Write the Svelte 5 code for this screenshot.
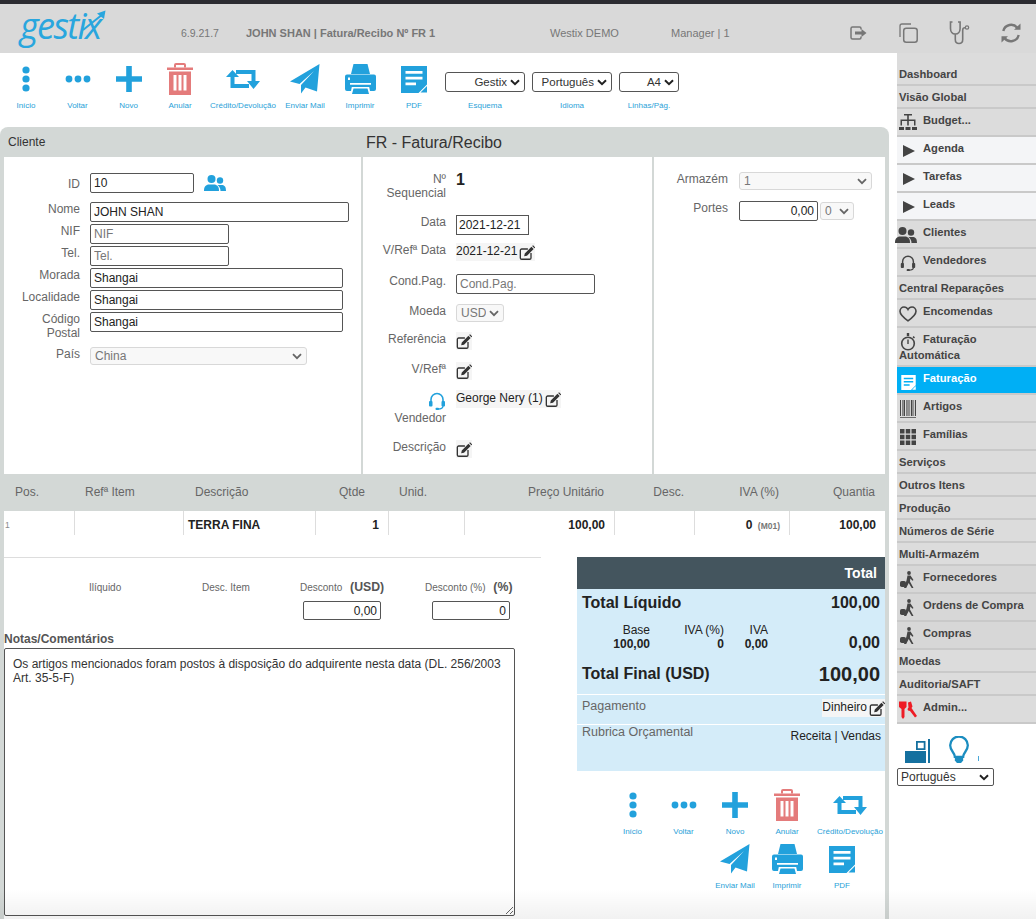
<script>
  const tb = [
    { l: 'Início', i: 'vdots', w: 14, h: 26 },
    { l: 'Voltar', i: 'hdots', w: 26, h: 10 },
    { l: 'Novo', i: 'plus', w: 26, h: 26 },
    { l: 'Anular', i: 'trash', w: 26, h: 32, c: 'red' },
    { l: 'Crédito/Devolução', i: 'retweet', w: 34, h: 20 },
    { l: 'Enviar Mail', i: 'plane', w: 30, h: 30 },
    { l: 'Imprimir', i: 'printer', w: 31, h: 30 },
    { l: 'PDF', i: 'doc', w: 26, h: 27 }
  ];
  const side = [
    { t: 'Dashboard' }, { t: 'Visão Global' },
    { t: 'Budget...', i: 'org' },
    { t: 'Agenda', i: 'play', c: 'light' }, { t: 'Tarefas', i: 'play', c: 'light' }, { t: 'Leads', i: 'play', c: 'light' },
    { t: 'Clientes', i: 'people', c: 'ppl' }, { t: 'Vendedores', i: 'headset' },
    { t: 'Central Reparações' },
    { t: 'Encomendas', i: 'heart' },
    { t: 'Faturação', t2: 'Automática', i: 'watch' },
    { t: 'Faturação', i: 'doc', c: 'active' },
    { t: 'Artigos', i: 'barcode' }, { t: 'Famílias', i: 'grid' },
    { t: 'Serviços' }, { t: 'Outros Itens' }, { t: 'Produção' }, { t: 'Números de Série' }, { t: 'Multi-Armazém' },
    { t: 'Fornecedores', i: 'walker', c: 'dim' }, { t: 'Ordens de Compra', i: 'walker', c: 'dim' }, { t: 'Compras', i: 'walker', c: 'dim' },
    { t: 'Moedas' }, { t: 'Auditoria/SAFT' },
    { t: 'Admin...', i: 'keys', c: 'keys' }
  ];
</script>

<svg class="defs" aria-hidden="true">
  <symbol id="vdots" viewBox="0 0 14 26"><circle cx="7" cy="4" r="3.6"/><circle cx="7" cy="13" r="3.6"/><circle cx="7" cy="22" r="3.6"/></symbol>
  <symbol id="hdots" viewBox="0 0 26 10"><circle cx="4" cy="5" r="3.4"/><circle cx="13" cy="5" r="3.4"/><circle cx="22" cy="5" r="3.4"/></symbol>
  <symbol id="plus" viewBox="0 0 26 26"><path d="M10.2 0h5.6v10.2H26v5.6H15.8V26h-5.6V15.8H0v-5.6h10.2z"/></symbol>
  <symbol id="trash" viewBox="0 0 26 32"><path d="M8 4.500V2a1 1 0 0 1 1-1h8a1 1 0 0 1 1 1v2.500" fill="none" stroke="currentColor" stroke-width="2"/><path d="M0 4.500h26V7H0z"/><path fill-rule="evenodd" d="M2 8.500h22V32H2zM6.500 12v15.500h3V12zM11.500 12v15.500h3V12zM16.500 12v15.500h3V12z"/></symbol>
  <symbol id="retweet" viewBox="0 0 34 20"><path d="M0 8 6.500 1 13 8H8.500v7H23v4H4.500V8z"/><path d="M10 1h19.500v11H34l-6.500 8L21 12h4.500V5H10z"/></symbol>
  <symbol id="plane" viewBox="0 0 30 30"><path d="M29.500 0 0 17.500l9.500 2.500L24 7 11 21v8.500l4.500-6 11.500 4z"/></symbol>
  <symbol id="printer" viewBox="0 0 31 30"><path d="M8.500 0h14L25 10H6z"/><path fill-rule="evenodd" d="M2 10.500h27a2 2 0 0 1 2 2V25a2 2 0 0 1-2 2h-4l-.8-4H6.800L6 27H2a2 2 0 0 1-2-2V12.500a2 2 0 0 1 2-2zM3 13.500V16h2v-2.500zM5 19v1.700h21V19z"/><path d="M8.500 24.500h14L24 30H7z"/></symbol>
  <symbol id="doc" viewBox="0 0 26 27"><path fill-rule="evenodd" d="M0 0h26v18.500L17.500 27H0zM4.500 5v2.800h17V5zM4.500 10.800v2.800h17v-2.800zM4.500 16.500v2.800H15v-2.800z"/><path d="M19.500 26.500 26 20v6.500z"/></symbol>
  <symbol id="org" viewBox="0 0 18 18"><path d="M5 0h8v1.500H5zM8.200 1.500h1.600v4H8.200zM1.500 5.500h15V7h-15zM1.500 7H3v4.500H1.500zM8.200 7h1.600v4.500H8.200zM15 7h1.500v4.500H15zM0 13h5v3H0zM6.500 13h5v3h-5zM13 13h5v3h-5z"/></symbol>
  <symbol id="play" viewBox="0 0 18 18"><path d="M4 3l12 6-12 6z"/></symbol>
  <symbol id="people" viewBox="0 0 22 18"><circle cx="7.500" cy="5" r="4"/><path d="M0 17c0-4 1-5.500 4-6.500h7c3 1 4 2.500 4 6.500z"/><circle cx="16" cy="6.500" r="3.200"/><path d="M13.500 11h5c2.500.8 3.500 2 3.500 6h-5.500c0-2.500-1-4.500-3-6z"/></symbol>
  <symbol id="headset" viewBox="0 0 18 20"><path d="M3 11V8.500a6 6 0 0 1 12 0V11" fill="none" stroke="currentColor" stroke-width="1.600"/><rect x="1" y="10" width="3.500" height="5.500" rx="1"/><rect x="13.500" y="10" width="3.500" height="5.500" rx="1"/><path d="M15 15c0 2.500-2 3-5 3" fill="none" stroke="currentColor" stroke-width="1.300"/><rect x="7.500" y="16.800" width="3.500" height="2.200" rx="1"/></symbol>
  <symbol id="heart" viewBox="0 0 18 16"><path d="M9 14.800C4 11.300 1 8.800 1 5.300 1 2.800 2.900 1 5 1c1.700 0 3.200.9 4 2.500C9.800 1.900 11.300 1 13 1c2.100 0 4 1.800 4 4.300 0 3.500-3 6-8 9.500z" fill="none" stroke="currentColor" stroke-width="1.600"/></symbol>
  <symbol id="watch" viewBox="0 0 18 18"><circle cx="9" cy="10.500" r="6.300" fill="none" stroke="currentColor" stroke-width="1.600"/><path d="M7.800 0h2.400v3H7.800zM8.300 6.500h1.400v4.500H8.300zM14.500 3l1.500 1.300-1 1.200-1.500-1.300z"/></symbol>
  <symbol id="barcode" viewBox="0 0 18 18"><path d="M1 0h1v16H1zM3 0h.6v16H3zM4.500 0h1.500v16H4.500zM7 0h.6v16H7zM8.500 0h1v16h-1zM10.500 0h.6v16h-.6zM12 0h1.500v16H12zM14.500 0h.6v16h-.6zM16 0h1v16h-1zM1 17h16v.8H1z"/></symbol>
  <symbol id="grid" viewBox="0 0 18 18"><path d="M1 1h4.500v4.500H1zM6.750 1h4.500v4.500h-4.500zM12.500 1H17v4.500h-4.500zM1 6.750h4.500v4.500H1zM6.750 6.750h4.500v4.500h-4.500zM12.500 6.750H17v4.500h-4.500zM1 12.500h4.500V17H1zM6.750 12.500h4.500V17h-4.500zM12.500 12.500H17V17h-4.500z"/></symbol>
  <symbol id="walker" viewBox="0 0 16 18"><circle cx="9" cy="2" r="1.900"/><path d="M7.500 4.500h3l3 4.500-1 .8-2.200-2.300-.3 3 3.500 6.500h-1.800l-3-5-2.500 5H4l2.500-7.500z"/><rect x="0" y="10" width="6" height="6" rx="1.800"/></symbol>
  <symbol id="keys" viewBox="0 0 18 18"><path d="M0 .5h7.500v5.500L5.500 8v8L4 18l-1.500-2V8L0 6z"/><path d="M9 1.500 12 .5l1.500 5-1 1.500L18 15l-2 1.500L11 10l-2-.5-.5-1.500 1-1.500z"/></symbol>
  <symbol id="edit" viewBox="0 0 18 18"><path d="M13.500 9v5.500a1.500 1.500 0 0 1-1.500 1.500H3a1.500 1.500 0 0 1-1.500-1.500V6A1.500 1.500 0 0 1 3 4.500h7" fill="none" stroke="currentColor" stroke-width="1.500"/><path d="M6.500 9.500 14 2l2.500 2.500L9 12l-3.200.7zM14.800 1.200l1-1 2.500 2.500-1 1z"/></symbol>
  <symbol id="logout" viewBox="0 0 18 14"><path d="M11 3.500V2.500A1.500 1.500 0 0 0 9.500 1h-7A1.500 1.500 0 0 0 1 2.500v9A1.500 1.500 0 0 0 2.500 13h7a1.500 1.500 0 0 0 1.500-1.500v-1" fill="none" stroke="currentColor" stroke-width="1.500"/><path d="M5 5.500h6.500V3L16.500 7l-5 4V8.500H5z"/></symbol>
  <symbol id="copy" viewBox="0 0 19 20"><path d="M1 14V3a2 2 0 0 1 2-2h9" fill="none" stroke="currentColor" stroke-width="1.300"/><rect x="4.700" y="5.200" width="13.500" height="14" rx="2.500" fill="none" stroke="currentColor" stroke-width="1.500"/></symbol>
  <symbol id="steth" viewBox="0 0 21 24"><path d="M3.500 1H1.500v6.500c0 3 1.800 5.500 4.800 5.500s4.800-2.500 4.800-5.500V1H9M6.300 13v5.500c0 2.500 1.500 4 3.700 4s3.700-1.500 3.700-4V9c0-1.500 1-2.200 2.300-2.200" fill="none" stroke="currentColor" stroke-width="1.600"/><circle cx="18" cy="6.500" r="1.700" fill="none" stroke="currentColor" stroke-width="1.200"/></symbol>
  <symbol id="sync" viewBox="0 0 20 20"><path d="M16.500 5A8 8 0 0 0 2.300 8M3.500 15a8 8 0 0 0 14.200-3" fill="none" stroke="currentColor" stroke-width="2.400"/><path d="M13 6.800h6.500V.5zM7 13.200H.5v6.300z"/></symbol>
  <symbol id="panels" viewBox="0 0 25 24"><path d="M0 12h21v12H0z"/><path fill-rule="evenodd" d="M11 2h9.500v9H11zM12.800 3.800v5.400h5.900V3.800z"/><path d="M23 0h2v24h-2z"/></symbol>
  <symbol id="bulb" viewBox="0 0 20 26"><path d="M6 20c0-4-4.500-5.500-4.500-11a8.500 8.500 0 0 1 17 0c0 5.500-4.500 7-4.500 11z" fill="none" stroke="currentColor" stroke-width="2.200"/><path d="M6 21h8v2.500l-2 2.500H8l-2-2.500z"/></symbol>
</svg>

{#snippet toolItem(it, extra = '')}
  <div class="tool {extra}" class:red={it.c === 'red'}>
    <div class="slot"><svg width={it.w} height={it.h}><use href="#{it.i}" /></svg></div>
    <span>{it.l}</span>
  </div>
{/snippet}

{#snippet edit()}
  <svg class="edit"><use href="#edit" /></svg>
{/snippet}

<div class="page">
  <div class="strip"></div>
  <header class="head">
    <svg class="logo" viewBox="0 0 90 36" width="90" height="36" role="img">
      <text x="0" y="30" class="logotext">gestix</text>
      <path d="M63 21 83 5" fill="none" stroke="currentColor" stroke-width="2" />
      <path d="M77 4.500 85.500 1.500 84 10z" />
    </svg>
    <span class="ver">6.9.21.7</span>
    <b class="doc">JOHN SHAN | Fatura/Recibo Nº FR 1</b>
    <span class="co">Westix DEMO</span>
    <span class="usr">Manager | 1</span>
    <div class="hicons">
      <svg width="18" height="14"><use href="#logout" /></svg>
      <svg width="19" height="20"><use href="#copy" /></svg>
      <svg width="21" height="24"><use href="#steth" /></svg>
      <svg width="20" height="20"><use href="#sync" /></svg>
    </div>
  </header>

  <div class="body">
    <main class="main">
      <div class="toolbar">
        <div class="tools">
          {#each tb as it}
            {@render toolItem(it)}
          {/each}
        </div>
        <div class="opts">
          <label class="opt o1"><select><option>Gestix</option></select><span>Esquema</span></label>
          <label class="opt o1"><select><option>Português</option></select><span>Idioma</span></label>
          <label class="opt o2"><select><option>A4</option></select><span>Linhas/Pág.</span></label>
        </div>
      </div>

      <section class="panel">
        <div class="ptitle"><span class="cli">Cliente</span><h1>FR - Fatura/Recibo</h1></div>

        <div class="cols">
          <div class="col cA">
            <span class="lb idl">ID</span>
            <div class="idrow"><input class="w104" value="10" /><svg class="ppl" width="22" height="18"><use href="#people" /></svg></div>
            <span class="lb">Nome</span><input class="w259" value="JOHN SHAN" />
            <span class="lb">NIF</span><input class="w139" placeholder="NIF" />
            <span class="lb">Tel.</span><input class="w139" placeholder="Tel." />
            <span class="lb">Morada</span><input class="w253" value="Shangai" />
            <span class="lb">Localidade</span><input class="w253" value="Shangai" />
            <span class="lb">Código<br />Postal</span><input class="w253" value="Shangai" />
            <span class="lb">País</span><select class="soft w217"><option>China</option></select>
          </div>

          <div class="col cB">
            <span class="lb">Nº<br />Sequencial</span><b class="seq">1</b>
            <span class="lb">Data</span><input class="w73 tight" value="2021-12-21" />
            <span class="lb">V/Refª Data</span><div class="ed"><span>2021-12-21</span>{@render edit()}</div>
            <span class="lb">Cond.Pag.</span><input class="w139" placeholder="Cond.Pag." />
            <span class="lb">Moeda</span><select class="soft w48"><option>USD</option></select>
            <span class="lb">Referência</span><div class="ed">{@render edit()}</div>
            <span class="lb">V/Refª</span><div class="ed">{@render edit()}</div>
            <span class="lb vend"><svg width="18" height="20"><use href="#headset" /></svg>Vendedor</span><div class="ed"><span>George Nery (1)</span>{@render edit()}</div>
            <span class="lb">Descrição</span><div class="ed">{@render edit()}</div>
          </div>

          <div class="col cC">
            <span class="lb">Armazém</span><select class="soft w133"><option>1</option></select>
            <span class="lb">Portes</span>
            <div class="port"><input class="w79 num" value="0,00" /><select class="soft w34"><option>0</option></select></div>
          </div>
        </div>

        <div class="thead">
          <span>Pos.</span><span>Refª Item</span><span class="d">Descrição</span><span class="r q">Qtde</span><span>Unid.</span>
          <span class="r">Preço Unitário</span><span class="r">Desc.</span><span class="r">IVA (%)</span><span class="r">Quantia</span>
        </div>
        <div class="trow">
          <span class="pos">1</span><span></span><b class="nm">TERRA FINA</b><b class="r">1</b><span></span>
          <b class="r">100,00</b><span></span><b class="r iv">0 <small>(M01)</small></b><b class="r">100,00</b>
        </div>

        <div class="lower">
          <div class="left">
            <div class="disc">
              <span class="a">Ilíquido</span>
              <span>Desc. Item</span>
              <span>Desconto <b class="unit">(USD)</b></span>
              <span>Desconto (%) <b class="unit">(%)</b></span>
              <input class="w78 num i1" value="0,00" />
              <input class="w78 num i2" value="0" />
            </div>
            <div class="notes">Notas/Comentários</div>
            <textarea>Os artigos mencionados foram postos à disposição do adquirente nesta data (DL. 256/2003 Art. 35-5-F)</textarea>
          </div>

          <div class="right">
            <div class="totals">
              <div class="thd">Total</div>
              <div class="tl"><b>Total Líquido</b><b>100,00</b></div>
              <div class="tax">
                <div class="tc c1"><span>Base</span><b>100,00</b></div>
                <div class="tc c2"><span>IVA (%)</span><b>0</b></div>
                <div class="tc c3"><span>IVA</span><b>0,00</b></div>
                <b class="tv">0,00</b>
              </div>
              <div class="tf"><b>Total Final (USD)</b><b class="big">100,00</b></div>
              <div class="pay"><span>Pagamento</span><div class="ed"><span>Dinheiro</span>{@render edit()}</div></div>
              <div class="rub"><span>Rubrica Orçamental</span><em>Receita | Vendas</em></div>
            </div>
            <div class="tools2">
              {#each tb.slice(0, 5) as it}
                {@render toolItem(it)}
              {/each}
              <div class="gap"></div>
              {@render toolItem(tb[5])}
              {@render toolItem(tb[6])}
              {@render toolItem(tb[7], 'pdf2')}
            </div>
          </div>
        </div>
      </section>
    </main>

    <aside class="side">
      <nav class="menu">
        {#each side as s}
          <div class="item {s.c ?? ''}" class:tall={s.i && !s.t2}>
            {#if s.i}<span class="mi"><svg width={s.i === 'people' ? 22 : 18} height="18"><use href="#{s.i}" /></svg></span>{/if}
            {s.t}{#if s.t2}<br />{s.t2}{/if}
          </div>
        {/each}
      </nav>
      <div class="extras">
        <svg class="pn" width="25" height="24"><use href="#panels" /></svg>
        <svg class="bl" width="22" height="27"><use href="#bulb" /></svg>
        <i class="tiny"></i>
      </div>
      <select class="lang"><option>Português</option></select>
    </aside>
  </div>
  <div class="fade"></div>
</div>

<style>
  :global(body) { margin: 0; background: #fff; overflow: hidden; }
  * { box-sizing: border-box; }
  .defs { position: absolute; width: 0; height: 0; }
  svg { fill: currentColor; display: block; overflow: visible; }
  .page { width: 1036px; height: 919px; overflow: hidden; position: relative; font: 12px/14px "Liberation Sans", Arial, sans-serif; color: #222; }
  .fade { position: absolute; left: 0; right: 0; bottom: 0; height: 30px; background: linear-gradient(rgba(0, 0, 0, 0), rgba(0, 0, 0, 0.055)); pointer-events: none; }
  .strip { height: 4px; background: #2c2c31; }

  .head { height: 49px; background: #d9d9d9; display: flex; align-items: center; color: #777; font-size: 11px; padding-top: 8px; }
  .logo { margin: -11px 0 0 20px; color: #29a6de; flex: none; }
  .logotext { font: italic 400 36px "Open Sans", sans-serif; letter-spacing: -1.6px; fill: #29a6de; }
  .ver { margin-left: 71px; width: 65px; flex: none; font-size: 10.500px; }
  .doc { width: 304px; flex: none; }
  .co { width: 121px; flex: none; }
  .usr { width: 58px; flex: none; white-space: nowrap; }
  .hicons { display: grid; grid-template-columns: 18px 19px 21px 20px; column-gap: 31px; align-items: center; margin-left: 121px; color: #777; }

  .body { display: flex; height: 866px; }
  .main { width: 897px; flex: none; display: flex; flex-direction: column; background: #fff; }

  .toolbar { height: 74px; display: flex; padding-top: 8px; }
  .tools { display: grid; grid-template-columns: 52px 51px 51px 52px 74px 50px 60px 48px; }
  .tool { display: flex; flex-direction: column; align-items: center; height: 54px; color: #22a1dc; }
  .tool.red { color: #e47b7b; }
  .slot { height: 36px; display: flex; align-items: center; justify-content: center; flex: none; }
  .tool span { font-size: 8px; line-height: 10px; margin-top: 4px; white-space: nowrap; color: #2a9fd8; }
  .opts { display: flex; gap: 7px; margin-left: 7px; padding-top: 11px; }
  .opt { display: flex; flex-direction: column; align-items: center; }
  .opt span { font-size: 8px; line-height: 10px; margin-top: 9px; color: #2a9fd8; }
  .opt select { height: 20px; text-align: right; }
  .o1 select { width: 80px; }
  .o2 select { width: 60px; }

  select {
    appearance: none; font: 11.500px "Liberation Sans", Arial, sans-serif; color: #333; background: #fff
      url("data:image/svg+xml,%3Csvg xmlns='http://www.w3.org/2000/svg' width='10' height='7'%3E%3Cpath d='M1 1.200l4 4 4-4' fill='none' stroke='%23222' stroke-width='2'/%3E%3C/svg%3E")
      no-repeat right 4px center;
    border: 1px solid #555; border-radius: 3px; padding: 0 17px 0 4px; margin: 0;
  }
  select.soft {
    height: 18px; border-color: #d8d8d8; background-color: #f8f8f8; color: #777; font-size: 12px;
    background-image: url("data:image/svg+xml,%3Csvg xmlns='http://www.w3.org/2000/svg' width='10' height='7'%3E%3Cpath d='M1 1.200l4 4 4-4' fill='none' stroke='%23666' stroke-width='1.800'/%3E%3C/svg%3E");
  }
  input {
    height: 20px; border: 1px solid #555; border-radius: 2px; padding: 0 3px; font: 12px "Liberation Sans", Arial, sans-serif; color: #222; background: #fff; margin: 0; outline: none;
  }
  input::placeholder { color: #777; opacity: 1; }
  .tight { padding: 0 2px; border-radius: 0; }
  .num { text-align: right; }
  .w104 { width: 104px; } .w259 { width: 259px; } .w139 { width: 139px; } .w253 { width: 253px; } .w217 { width: 217px; }
  .w73 { width: 73px; } .w48 { width: 48px; } .w133 { width: 133px; } .w79 { width: 79px; } .w34 { width: 34px; } .w78 { width: 78px; }

  .panel { flex: 1; background: #d3d8d6; border-radius: 8px 8px 0 0; width: 889px; padding: 0 4px; position: relative; display: flex; flex-direction: column; min-height: 0; }
  .ptitle { height: 30px; display: flex; align-items: center; position: relative; flex: none; }
  .cli { margin-left: 4px; font-size: 12px; color: #333; margin-top: -1px; }
  h1 { position: absolute; left: 0; right: 0; top: 7px; margin: 0; padding-right: 21px; font: 400 16px/18px "Liberation Sans", Arial, sans-serif; color: #333; text-align: center; }
  .cols { height: 317px; display: flex; gap: 2px; flex: none; }
  .col { background: #fff; display: grid; align-content: start; align-items: start; justify-items: start; }
  .lb { color: #666; font-size: 12px; line-height: 14px; text-align: right; justify-self: end; }
  .cA { width: 357px; grid-template-columns: 76px 1fr; column-gap: 10px; padding-top: 16px; grid-template-rows: 29px repeat(5, 22px) 35px 20px; }
  .idl { padding-top: 4px; }
  .idrow { display: flex; align-items: center; gap: 10px; }
  .ppl { color: #22a1dc; }
  .cB { width: 289px; grid-template-columns: 83px 1fr; column-gap: 10px; padding-top: 15px; grid-template-rows: 43px 28px 31px 30px 28px 30px 28px 50px 30px; }
  .seq { font-size: 16px; line-height: 16px; color: #222; }
  .vend { display: flex; flex-direction: column; align-items: flex-end; margin-top: 1px; }
  .vend svg { color: #22a1dc; }
  .ed { display: inline-flex; align-items: flex-start; background: #f5f5f5; min-height: 16px; color: #222; line-height: 16px; }
  .ed span { margin-right: 2px; }
  .edit { width: 16px; height: 16px; margin-top: 2px; color: #333; }
  .cC { flex: 1; grid-template-columns: 74px 1fr; column-gap: 11px; padding-top: 15px; grid-template-rows: 29px 24px; }
  .port { display: flex; gap: 2px; align-items: center; }

  .thead, .trow { display: grid; grid-template-columns: 70px 109px 132px 73px 76px 150px 80px 95px 96px; flex: none; }
  .thead { height: 37px; align-items: center; color: #666; font-size: 12px; padding-bottom: 2px; }
  .thead span { padding-left: 11px; }
  .thead .d { padding-left: 12px; }
  .thead .r { text-align: right; padding: 0 10px 0 0; }
  .thead .q { padding-right: 23px; }
  .trow { height: 24px; background: #fff; align-items: stretch; }
  .trow > * { border-left: 1px solid #ddd; line-height: 28px; }
  .trow > :first-child { border-left: 0; }
  .trow b { color: #222; }
  .pos { font-size: 8.500px; color: #888; padding-left: 1px; }
  .nm { padding-left: 4px; }
  .trow .r { text-align: right; padding-right: 9px; }
  .trow .iv { padding-right: 9px; }
  small { font-size: 8.500px; color: #777; margin-left: 2px; }

  .lower { flex: 1; background: #fff; display: flex; padding-top: 22px; min-height: 0; justify-content: space-between; }
  .left { width: 537px; border-top: 1px solid #ddd; }
  .disc { display: grid; grid-template-columns: 113px 98px 125px 1fr; padding-left: 85px; padding-top: 22px; font-size: 10px; color: #666; row-gap: 6px; align-items: center; }
  .disc .a { grid-column: 1; }
  .unit { font-size: 12.300px; color: #555; margin-left: 5px; }
  .i1 { grid-column: 3; margin-left: 3px; height: 19px; }
  .i2 { grid-column: 4; margin-left: 7px; height: 19px; }
  .notes { font-weight: 700; color: #555; margin-top: 12px; }
  textarea { display: block; width: 511px; height: 268px; margin-top: 2px; border: 1px solid #555; border-radius: 2px; padding: 8px 8px; font: 12px/14px "Liberation Sans", Arial, sans-serif; color: #333; outline: none; }

  .right { width: 308px; flex: none; }
  .totals { height: 214px; background: #d4ecf9; }
  .thd { height: 32px; background: #44555e; color: #fff; font-weight: 700; font-size: 14px; line-height: 32px; text-align: right; padding-right: 8px; }
  .tl { display: flex; justify-content: space-between; padding: 5px 5px 0; font-size: 16px; line-height: 18px; color: #222; }
  .tax { position: relative; height: 36px; margin-top: 11px; }
  .tc { position: absolute; top: 0; display: flex; flex-direction: column; align-items: flex-end; font-size: 12px; line-height: 14px; color: #222; }
  .c1 { right: 235px; } .c2 { right: 161px; } .c3 { right: 117px; }
  .tv { position: absolute; right: 5px; top: 11px; font-size: 16px; line-height: 18px; color: #222; }
  .tf { display: flex; justify-content: space-between; align-items: center; padding: 0 5px; margin-top: 2px; height: 26px; font-size: 16px; color: #222; }
  .big { font-size: 20px; }
  .pay { margin-top: 7px; border-top: 1px solid #fff; height: 30px; display: flex; justify-content: space-between; padding: 4px 0 0 5px; color: #666; font-size: 12.500px; }
  .pay .ed { font-size: 12px; height: 18px; }
  .rub { border-top: 1px solid #fff; display: flex; justify-content: space-between; padding: 0 4px 0 5px; color: #666; font-size: 12.500px; }
  .rub em { font-style: normal; color: #222; font-size: 12px; margin-top: 4px; }
  .tools2 { display: grid; grid-template-columns: 51px 51px 52px 52px 74px; justify-content: end; margin: 16px -2px 0 0; }
  .gap { grid-column: 1 / 3; }
  .pdf2 { margin-right: 16px; }

  .side { flex: 1; background: #fff; }
  .menu { background: #dcdcdc; padding-top: 10px; }
  .item { padding: 3px 2px 2px; border-bottom: 2px solid #c9c9c9; font-weight: 700; font-size: 11.200px; line-height: 16px; color: #444; }
  .item.tall { padding-bottom: 7px; }
  .mi { float: left; width: 24px; height: 16px; color: #444; }
  .mi svg { margin-top: 2px; }
  .light { background: #f4f5f7; }
  .dim { background: #d7d7d7; }
  .active { background: #00aff5; color: #fff; padding-bottom: 5px; }
  .active .mi { color: #fff; }
  .active .mi svg { width: 15px; height: 15px; margin: 5px 0 0 2px; }
  .ppl .mi { margin-left: -4px; width: 28px; }
  .keys .mi { color: #ee1c25; }
  .extras { display: flex; align-items: flex-end; height: 39px; padding-left: 8px; }
  .pn { color: #15709f; }
  .bl { color: #1b8dc0; margin-left: 18px; }
  .tiny { width: 1px; height: 5px; background: #4aa8d8; margin: 0 0 2px 8px; }
  .lang { display: block; width: 97px; height: 18px; margin-top: 5px; font-size: 12px; border-radius: 2px; padding-left: 3px; }
</style>
